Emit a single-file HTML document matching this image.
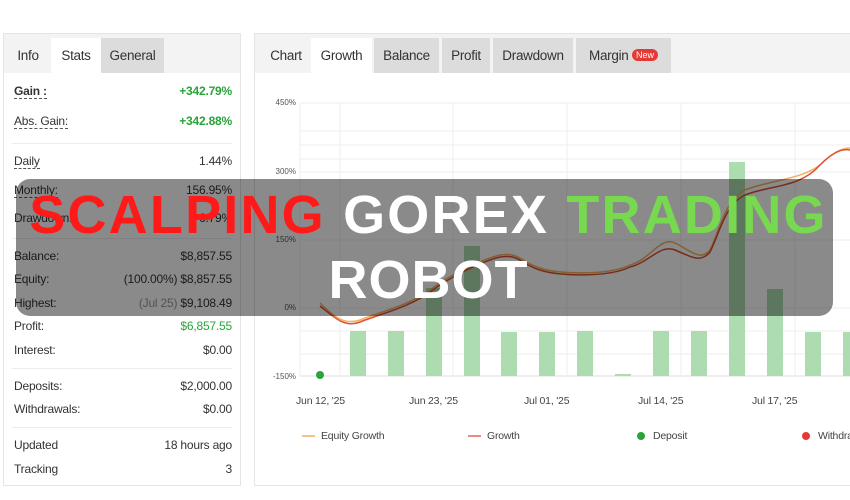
<!DOCTYPE html>
<html><head><meta charset="utf-8"><style>
*{margin:0;padding:0;box-sizing:border-box}
body{width:850px;height:500px;background:#fff;position:relative;overflow:hidden;font-family:"Liberation Sans",sans-serif;color:#333}
.a{position:absolute}
.panel{position:absolute;border:1px solid #e4e4e4;background:#fff}
.tabs{position:absolute;left:0;right:0;top:0;height:39px;background:#f3f3f3}
.tab{position:absolute;top:4px;height:35px;font-size:13.5px;line-height:35px;text-align:center;color:#333;letter-spacing:-0.3px}
.row{position:absolute;left:10px;right:8px;font-size:12px;color:#333;letter-spacing:-0.2px}
.row .r{position:absolute;right:0;top:0}
.u{border-bottom:1px dashed #555}
.g{color:#2aa33a}
.sep{position:absolute;left:8px;right:8px;height:1px;background:#ececec}
.yl{position:absolute;font-size:8px;color:#555;text-align:right;width:40px}
.xl{position:absolute;font-size:10.5px;color:#444;letter-spacing:-0.2px}
</style></head><body>
<div class="panel" style="left:3px;top:33px;width:238px;height:453px">
 <div class="tabs"></div>
 <div class="tab" style="left:1px;width:46px">Info</div>
 <div class="tab" style="left:47px;width:50px;background:#fff">Stats</div>
 <div class="tab" style="left:97px;width:63px;background:#dcdcdc">General</div>
 <div class="row" style="top:50px"><span class="u" style="font-weight:bold">Gain :</span><span class="r g" style="font-weight:bold">+342.79%</span></div>
 <div class="row" style="top:80px"><span class="u">Abs. Gain:</span><span class="r g" style="font-weight:bold">+342.88%</span></div>
 <div class="sep" style="top:109px"></div>
 <div class="row" style="top:120px"><span class="u">Daily</span><span class="r">1.44%</span></div>
 <div class="row" style="top:149px"><span class="u">Monthly:</span><span class="r">156.95%</span></div>
 <div class="row" style="top:177px"><span>Drawdown:</span><span class="r">6.79%</span></div>
 <div class="sep" style="top:204px"></div>
 <div class="row" style="top:215px">Balance:<span class="r">$8,857.55</span></div>
 <div class="row" style="top:238px">Equity:<span class="r">(100.00%) $8,857.55</span></div>
 <div class="row" style="top:262px">Highest:<span class="r"><span style="color:#999">(Jul 25)</span> $9,108.49</span></div>
 <div class="row" style="top:285px">Profit:<span class="r g">$6,857.55</span></div>
 <div class="row" style="top:309px">Interest:<span class="r">$0.00</span></div>
 <div class="sep" style="top:334px"></div>
 <div class="row" style="top:345px">Deposits:<span class="r">$2,000.00</span></div>
 <div class="row" style="top:368px">Withdrawals:<span class="r">$0.00</span></div>
 <div class="sep" style="top:393px"></div>
 <div class="row" style="top:404px">Updated<span class="r">18 hours ago</span></div>
 <div class="row" style="top:428px">Tracking<span class="r">3</span></div>
</div>
<div class="panel" style="left:254px;top:33px;width:600px;height:453px">
 <div class="tabs"></div>
 <div class="tab" style="left:6px;width:50px">Chart</div>
 <div class="tab" style="left:56px;width:61px;background:#fff">Growth</div>
 <div class="tab" style="left:119px;width:65px;background:#dcdcdc">Balance</div>
 <div class="tab" style="left:187px;width:48px;background:#dcdcdc">Profit</div>
 <div class="tab" style="left:238px;width:80px;background:#dcdcdc">Drawdown</div>
 <div class="tab" style="left:321px;width:95px;background:#dcdcdc">Margin&nbsp;<span style="background:#e53935;color:#fff;font-size:9px;border-radius:7px;padding:1px 4px;vertical-align:2px;letter-spacing:0">New</span></div>
</div>
<svg class="a" style="left:0;top:0" width="850" height="500">
 <g stroke="#eeeeee" stroke-width="1">
  <line x1="300" y1="103" x2="850" y2="103"/><line x1="300" y1="131" x2="850" y2="131"/><line x1="300" y1="145" x2="850" y2="145"/><line x1="300" y1="159" x2="850" y2="159"/>
  <line x1="300" y1="172" x2="850" y2="172"/><line x1="300" y1="240" x2="850" y2="240"/><line x1="300" y1="308" x2="850" y2="308"/><line x1="300" y1="331" x2="850" y2="331"/><line x1="300" y1="354" x2="850" y2="354"/>
  <line x1="300" y1="376" x2="850" y2="376" stroke="#ddd"/>
  <line x1="300" y1="103" x2="300" y2="376"/><line x1="340" y1="103" x2="340" y2="376"/><line x1="453" y1="103" x2="453" y2="376"/><line x1="567" y1="103" x2="567" y2="376"/><line x1="681" y1="103" x2="681" y2="376"/><line x1="795" y1="103" x2="795" y2="376"/>
 </g>
 <g fill="#acdcb0">
  <rect x="350" y="331" width="16" height="45"/><rect x="388" y="331" width="16" height="45"/><rect x="426" y="288" width="16" height="88"/><rect x="464" y="246" width="16" height="130"/>
  <rect x="501" y="332" width="16" height="44"/><rect x="539" y="332" width="16" height="44"/><rect x="577" y="331" width="16" height="45"/><rect x="615" y="374" width="16" height="2"/>
  <rect x="653" y="331" width="16" height="45"/><rect x="691" y="331" width="16" height="45"/><rect x="729" y="162" width="16" height="214"/><rect x="767" y="289" width="16" height="87"/>
  <rect x="805" y="332" width="16" height="44"/><rect x="843" y="332" width="16" height="44"/>
 </g>
 <path d="M320 303 C335 318,345 325,360 320 C380 312,410 305,430 290 C450 275,480 260,500 255 C520 252,520 262,540 268 C560 275,610 275,630 265 C650 260,660 236,675 243 C690 250,700 262,710 250 C720 230,725 200,745 190 C770 180,800 180,820 165 C830 155,840 148,850 148" fill="none" stroke="#f0b060" stroke-width="1.5"/>
 <path d="M320 306 C335 318,345 328,360 322 C380 314,410 307,430 292 C450 277,480 262,500 257 C520 254,520 264,540 270 C560 277,610 277,630 267 C650 262,660 244,675 250 C690 256,700 264,710 252 C720 232,725 205,745 195 C770 185,800 188,820 165 C830 155,840 148,850 150" fill="none" stroke="#e05030" stroke-width="1.5"/>
 <circle cx="320" cy="375" r="4" fill="#2aa33a"/>
 <line x1="302" y1="436" x2="315" y2="436" stroke="#f6c08a" stroke-width="2"/>
 <line x1="468" y1="436" x2="481" y2="436" stroke="#f08a80" stroke-width="2"/>
 <circle cx="641" cy="436" r="4" fill="#2aa33a"/>
 <circle cx="806" cy="436" r="4" fill="#e53935"/>
</svg>
<div class="yl" style="left:256px;top:98px">450%</div>
<div class="yl" style="left:256px;top:167px">300%</div>
<div class="yl" style="left:256px;top:235px">150%</div>
<div class="yl" style="left:256px;top:303px">0%</div>
<div class="yl" style="left:256px;top:372px">-150%</div>
<div class="xl" style="left:296px;top:395px">Jun 12, '25</div>
<div class="xl" style="left:409px;top:395px">Jun 23, '25</div>
<div class="xl" style="left:524px;top:395px">Jul 01, '25</div>
<div class="xl" style="left:638px;top:395px">Jul 14, '25</div>
<div class="xl" style="left:752px;top:395px">Jul 17, '25</div>
<div class="xl" style="left:321px;top:430px">Equity Growth</div>
<div class="xl" style="left:487px;top:430px">Growth</div>
<div class="xl" style="left:653px;top:430px">Deposit</div>
<div class="xl" style="left:818px;top:430px">Withdrawal</div>
<div class="a" style="left:16px;top:179px;width:817px;height:137px;background:rgba(0,0,0,0.46);border-radius:14px"></div>
<div class="a" style="left:20px;top:181px;width:817px;text-align:center;font-weight:bold;font-size:54px;line-height:68px;white-space:nowrap;letter-spacing:2.2px"><span style="color:#ff1a1a">SCALPING</span> <span style="color:#fff">GOREX</span> <span style="color:#78d850">TRADING</span></div>
<div class="a" style="left:20px;top:246px;width:817px;text-align:center;font-weight:bold;font-size:54px;line-height:68px;color:#fff;letter-spacing:1px">ROBOT</div>
</body></html>
